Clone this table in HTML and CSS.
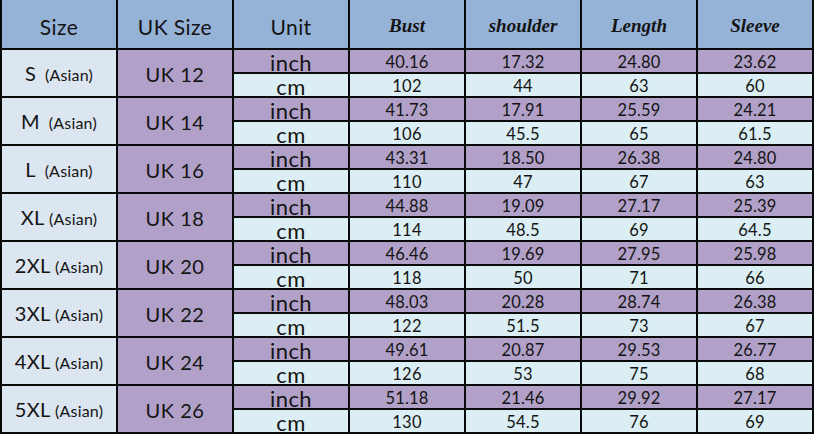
FILE: index.html
```html
<!DOCTYPE html>
<html>
<head>
<meta charset="utf-8">
<link rel="stylesheet" href="styles.css">
</head>
<body>
<table class="chart">
  <colgroup>
    <col class="c"><col class="c"><col class="c"><col class="c"><col class="c"><col class="c"><col class="c">
  </colgroup>
  <thead>
    <tr class="head">
      <th class="plain">Size</th>
      <th class="plain">UK Size</th>
      <th class="plain">Unit</th>
      <th class="script">Bust</th>
      <th class="script">shoulder</th>
      <th class="script">Length</th>
      <th class="script">Sleeve</th>
    </tr>
  </thead>
  <tbody>
    <tr class="inch"><td class="size" rowspan="2"><span class="big">S</span>&nbsp; <span class="small">(Asian)</span></td><td class="uk" rowspan="2">UK 12</td><td class="unit">inch</td><td>40.16</td><td>17.32</td><td>24.80</td><td>23.62</td></tr>
    <tr class="cm"><td class="unit">cm</td><td>102</td><td>44</td><td>63</td><td>60</td></tr>
    <tr class="inch"><td class="size" rowspan="2"><span class="big">M</span>&nbsp; <span class="small">(Asian)</span></td><td class="uk" rowspan="2">UK 14</td><td class="unit">inch</td><td>41.73</td><td>17.91</td><td>25.59</td><td>24.21</td></tr>
    <tr class="cm"><td class="unit">cm</td><td>106</td><td>45.5</td><td>65</td><td>61.5</td></tr>
    <tr class="inch"><td class="size" rowspan="2"><span class="big">L</span>&nbsp; <span class="small">(Asian)</span></td><td class="uk" rowspan="2">UK 16</td><td class="unit">inch</td><td>43.31</td><td>18.50</td><td>26.38</td><td>24.80</td></tr>
    <tr class="cm"><td class="unit">cm</td><td>110</td><td>47</td><td>67</td><td>63</td></tr>
    <tr class="inch"><td class="size" rowspan="2"><span class="big">XL</span> <span class="small">(Asian)</span></td><td class="uk" rowspan="2">UK 18</td><td class="unit">inch</td><td>44.88</td><td>19.09</td><td>27.17</td><td>25.39</td></tr>
    <tr class="cm"><td class="unit">cm</td><td>114</td><td>48.5</td><td>69</td><td>64.5</td></tr>
    <tr class="inch"><td class="size" rowspan="2"><span class="big">2XL</span> <span class="small">(Asian)</span></td><td class="uk" rowspan="2">UK 20</td><td class="unit">inch</td><td>46.46</td><td>19.69</td><td>27.95</td><td>25.98</td></tr>
    <tr class="cm"><td class="unit">cm</td><td>118</td><td>50</td><td>71</td><td>66</td></tr>
    <tr class="inch"><td class="size" rowspan="2"><span class="big">3XL</span> <span class="small">(Asian)</span></td><td class="uk" rowspan="2">UK 22</td><td class="unit">inch</td><td>48.03</td><td>20.28</td><td>28.74</td><td>26.38</td></tr>
    <tr class="cm"><td class="unit">cm</td><td>122</td><td>51.5</td><td>73</td><td>67</td></tr>
    <tr class="inch"><td class="size" rowspan="2"><span class="big">4XL</span> <span class="small">(Asian)</span></td><td class="uk" rowspan="2">UK 24</td><td class="unit">inch</td><td>49.61</td><td>20.87</td><td>29.53</td><td>26.77</td></tr>
    <tr class="cm"><td class="unit">cm</td><td>126</td><td>53</td><td>75</td><td>68</td></tr>
    <tr class="inch"><td class="size" rowspan="2"><span class="big">5XL</span> <span class="small">(Asian)</span></td><td class="uk" rowspan="2">UK 26</td><td class="unit">inch</td><td>51.18</td><td>21.46</td><td>29.92</td><td>27.17</td></tr>
    <tr class="cm"><td class="unit">cm</td><td>130</td><td>54.5</td><td>76</td><td>69</td></tr>
  </tbody>
</table>
</body>
</html>
```

FILE: styles.css
```css
html, body {
  margin: 0;
  padding: 0;
  background: #ffffff;
}

.chart {
  table-layout: fixed;
  width: 814px;
  border-collapse: collapse;
  font-family: "Lato", "DejaVu Sans", sans-serif;
  color: #141414;
}

.chart .c {
  width: 116px;
}

.chart th,
.chart td {
  border: 2px solid #0a0a0a;
  padding: 0;
  text-align: center;
  overflow: hidden;
  white-space: nowrap;
}

.chart thead th {
  border-top: none;
}

.head th {
  height: 44px;
  padding-top: 4px;
  background: #95b3d7;
  font-weight: normal;
}

.head .plain {
  font-size: 21px;
  letter-spacing: 0.4px;
}

.head .script {
  font-family: "Liberation Serif", serif;
  font-style: italic;
  font-weight: bold;
  font-size: 19px;
}

.chart tbody td {
  height: 20px;
  padding-top: 2px;
  font-size: 16.5px;
  line-height: 20px;
  letter-spacing: 0.2px;
}

.inch td {
  background: #b1a0c7;
}

.cm td {
  background: #daeef3;
}

.chart td.size {
  background: #dce6f1;
  vertical-align: middle;
  padding-top: 1px;
}

.size .big {
  font-size: 20px;
  letter-spacing: 0.3px;
}

.size .small {
  font-size: 16px;
}

.chart td.uk {
  background: #b1a0c7;
  font-size: 20px;
  letter-spacing: 0.5px;
  padding-top: 2px;
}

.chart td.unit {
  font-size: 22px;
  line-height: 18px;
  height: 18px;
  padding-top: 4px;
  vertical-align: top;
  letter-spacing: 0.4px;
}
```
